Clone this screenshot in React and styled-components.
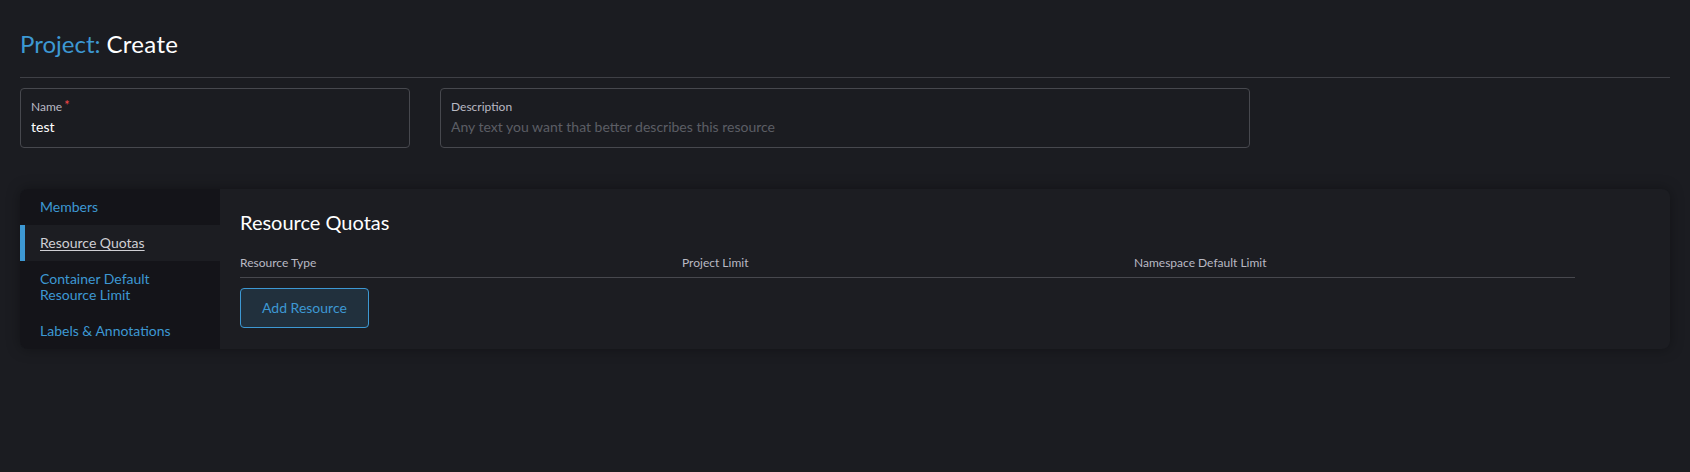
import React from "react";
import styled, { createGlobalStyle } from "styled-components";

const GlobalStyle = createGlobalStyle`
  * { box-sizing: border-box; }
  html, body { margin: 0; padding: 0; background: #1b1c21; }
  body {
    font-family: Lato, "Open Sans", "Liberation Sans", sans-serif;
    color: #e6e6e8;
    -webkit-font-smoothing: antialiased;
  }
`;

const Page = styled.div`
  min-height: 472px;
  padding: 0 20px 20px;
  background: #1b1c21;
`;

const Header = styled.header`
  padding: 29px 0 19px;
  border-bottom: 1px solid #3f4046;
`;

const Title = styled.h1`
  margin: 0;
  font-size: 24px;
  font-weight: 400;
  line-height: normal;
  color: #ffffff;
`;

const Crumb = styled.span`
  color: #3d98d3;
  margin-right: 6px;
`;

const TitleName = styled.span`
  letter-spacing: 0.3px;
`;

const FieldRow = styled.div`
  display: grid;
  grid-template-columns: 390px 810px;
  column-gap: 30px;
  margin-top: 10px;
`;

const Field = styled.div`
  height: 60px;
  padding: 10px;
  border: 1px solid #47484e;
  border-radius: 4px;
  background: #1b1c21;
  display: flex;
  flex-direction: column;
`;

const FieldLabel = styled.label`
  font-size: 12px;
  line-height: normal;
  color: #b9b9c4;
  margin-bottom: 4px;
`;

const Required = styled.span`
  color: #f64747;
  margin-left: 2px;
  font-size: 13px;
  line-height: 12px;
  vertical-align: top;
`;

const TextInput = styled.input`
  border: none;
  outline: none;
  padding: 0;
  margin: 0;
  background: transparent;
  font-family: inherit;
  font-size: 14px;
  line-height: 17px;
  height: 17px;
  color: #ffffff;
  &::placeholder { color: #5c5e65; }
`;

const Tabbed = styled.section`
  display: flex;
  margin-top: 41px;
  border-radius: 8px;
  overflow: hidden;
  background: #1c1d22;
  box-shadow: 0 0 14px rgba(0, 0, 0, 0.35);
`;

const SideTabs = styled.nav`
  width: 200px;
  flex: 0 0 200px;
  background: #141419;
  display: flex;
  flex-direction: column;
`;

const Tab = styled.a`
  display: block;
  padding: 10px 20px 10px 15px;
  border-left: 5px solid ${(p) => (p.$active ? "#3d98d3" : "transparent")};
  background: ${(p) => (p.$active ? "#1c1d22" : "transparent")};
  color: ${(p) => (p.$active ? "#cfcfd4" : "#3d98d3")};
  text-decoration: ${(p) => (p.$active ? "underline" : "none")};
  text-underline-offset: 2px;
  font-size: 14px;
  line-height: 16px;
  cursor: pointer;
`;

const Content = styled.div`
  flex: 1;
  padding: 21px 20px 20px;
`;

const SectionTitle = styled.h3`
  margin: 0 0 21px;
  font-size: 20px;
  font-weight: 400;
  line-height: 24px;
  color: #ffffff;
`;

const HeadRow = styled.div`
  display: grid;
  grid-template-columns: 442px 452px 1fr;
  margin-right: 75px;
  padding-bottom: 7px;
  border-bottom: 1px solid #47484e;
`;

const HeadCell = styled.div`
  font-size: 12px;
  line-height: 15px;
  color: #b9b9c4;
`;

const Button = styled.button`
  margin-top: 10px;
  height: 40px;
  padding: 0 21px;
  border: 1px solid #3d98d3;
  border-radius: 4px;
  background: #21303d;
  color: #3d98d3;
  font-family: inherit;
  font-size: 14px;
  line-height: 38px;
  cursor: pointer;
`;

const tabs = [
  { label: "Members" },
  { label: "Resource Quotas", active: true },
  { label: "Container Default Resource Limit" },
  { label: "Labels & Annotations" },
];

export default function App() {
  return (
    <>
      <GlobalStyle />
      <Page>
        <Header>
          <Title>
            <Crumb>Project:</Crumb>
            <TitleName>Create</TitleName>
          </Title>
        </Header>
        <FieldRow>
          <Field>
            <FieldLabel>
              Name<Required>*</Required>
            </FieldLabel>
            <TextInput defaultValue="test" />
          </Field>
          <Field>
            <FieldLabel>Description</FieldLabel>
            <TextInput placeholder="Any text you want that better describes this resource" />
          </Field>
        </FieldRow>
        <Tabbed>
          <SideTabs>
            {tabs.map((t) => (
              <Tab key={t.label} $active={t.active}>
                {t.label}
              </Tab>
            ))}
          </SideTabs>
          <Content>
            <SectionTitle>Resource Quotas</SectionTitle>
            <HeadRow>
              <HeadCell>Resource Type</HeadCell>
              <HeadCell>Project Limit</HeadCell>
              <HeadCell>Namespace Default Limit</HeadCell>
            </HeadRow>
            <Button>Add Resource</Button>
          </Content>
        </Tabbed>
      </Page>
    </>
  );
}
